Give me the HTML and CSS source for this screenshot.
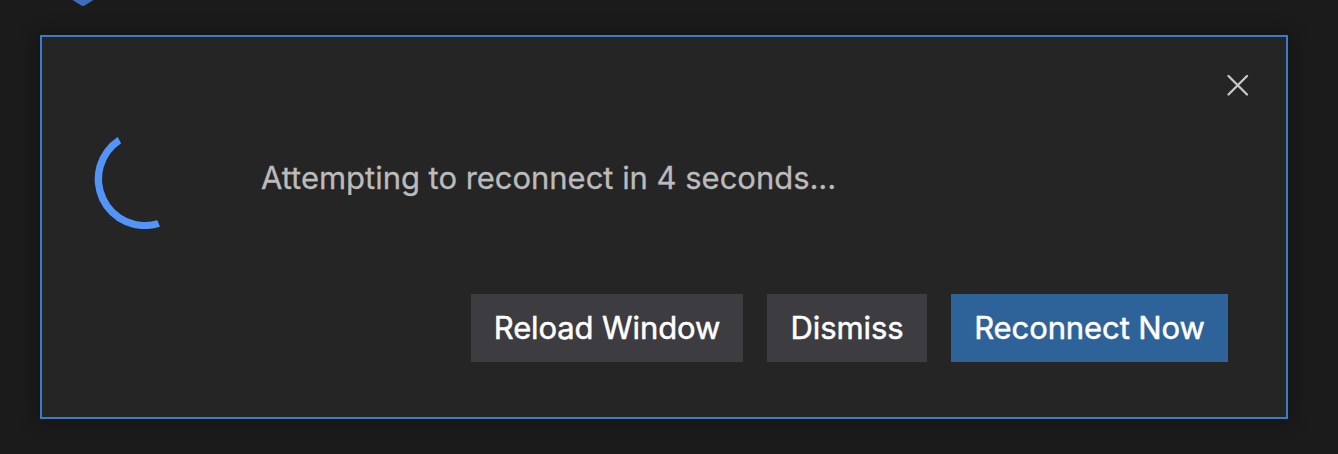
FILE: index.html
```html
<!DOCTYPE html>
<html lang="en">
<head>
<meta charset="utf-8">
<title>Reconnect</title>
<link rel="stylesheet" href="styles.css">
</head>
<body>
<svg class="backdrop-mark" viewBox="0 0 24 8"><path d="M0 -1L9.500 5Q12 7 14.500 5L24 -1Z"/></svg>
<main class="dialog" role="dialog">
  <button class="close" aria-label="Close"><svg viewBox="0 0 24 24"><path d="M2.500 3L21 21.500M21 3L2.500 21.500"/></svg></button>
  <div class="content">
    <svg class="spinner" viewBox="0 0 100 100"><path d="M23.700 8A50 50 0 0 0 66 97.700L63.400 91.200A43 43 0 0 1 27.100 14.300Z"/></svg>
    <p class="message">Attempting to reconnect in 4 seconds...</p>
  </div>
  <div class="actions">
    <button class="button reload">Reload Window</button>
    <button class="button dismiss">Dismiss</button>
    <button class="button primary">Reconnect Now</button>
  </div>
</main>
</body>
</html>
```
FILE: styles.css
```css
* { box-sizing: border-box; }
body { margin: 0; height: 454px; padding: 35px 50px 0 40px; background: #1b1b1b; font-family: Inter, sans-serif; overflow: hidden; }
.backdrop-mark { position: absolute; left: 71px; top: 0; width: 24px; height: 8px; fill: #3c6db8; }
.dialog { width: 1248px; height: 384px; border: 2px solid #387dcd; background: #252525; box-shadow: 0 0 16px 4px rgba(0,0,0,.25); display: flex; flex-direction: column; padding: 36px 36px 55px 52px; }
.close { align-self: flex-end; width: 24px; height: 24px; padding: 0; border: 0; background: none; }
.close svg { display: block; width: 24px; height: 24px; fill: none; stroke: #c8c8c8; stroke-width: 2.3; stroke-linecap: round; }
.content { display: flex; align-items: center; gap: 67px; height: 100px; margin-top: 32px; }
.spinner { width: 100px; height: 100px; flex: none; fill: #5294f8; }
.message { margin: 0 0 2px; color: #bbb; font-size: 31px; line-height: 40px; letter-spacing: -.03px; -webkit-text-stroke: .3px #bbb; white-space: nowrap; }
.actions { display: flex; justify-content: flex-end; gap: 24px; margin-top: auto; padding-right: 22px; }
.button { height: 68px; padding: 0 0 2px; border: 0; color: #fff; background: #3c3c41; font: 400 31px Inter, sans-serif; letter-spacing: -.1px; -webkit-text-stroke: .5px #fff; white-space: nowrap; }
.reload { width: 272px; }
.dismiss { width: 160px; }
.primary { width: 277px; background: #2e639a; }
```
